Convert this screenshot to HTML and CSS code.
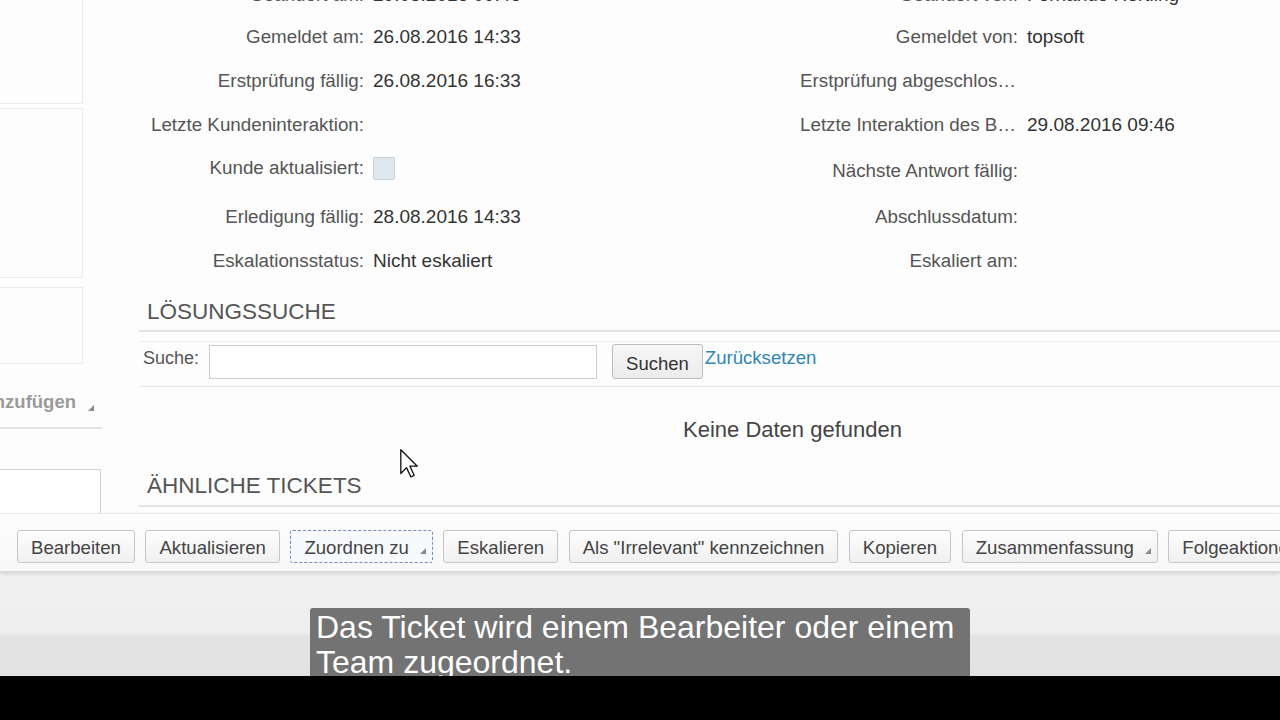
FILE: index.html
```html
<!DOCTYPE html>
<html lang="de">
<head>
    <meta charset="UTF-8">
    <meta name="viewport" content="width=device-width, initial-scale=1.0">
    <title>Ticket</title>
    <link rel="stylesheet" href="styles.css">
</head>
<body>
    <div class="screen">
        <div class="workspace">
            <aside class="sidebar">
                <div class="side-box side-box-top"></div>
                <div class="side-box side-box-mid"></div>
                <div class="side-box side-box-low"></div>
                <div class="side-action">
                    <span class="side-action-text">Anhang hinzufügen</span>
                    <i class="corner"></i>
                </div>
                <div class="side-input"></div>
            </aside>

            <main class="main">
                <div class="details">
                    <div class="label">Geändert am:</div>
                    <div class="value">29.08.2016 09:46</div>
                    <div class="label">Geändert von:</div>
                    <div class="value">Fernando Hertling</div>

                    <div class="label">Gemeldet am:</div>
                    <div class="value">26.08.2016 14:33</div>
                    <div class="label">Gemeldet von:</div>
                    <div class="value">topsoft</div>

                    <div class="label">Erstprüfung fällig:</div>
                    <div class="value">26.08.2016 16:33</div>
                    <div class="label">Erstprüfung abgeschlossen:</div>
                    <div class="value"></div>

                    <div class="label">Letzte Kundeninteraktion:</div>
                    <div class="value"></div>
                    <div class="label">Letzte Interaktion des Bearbeiters:</div>
                    <div class="value">29.08.2016 09:46</div>

                    <div class="label label-raised">Kunde aktualisiert:</div>
                    <div class="value label-raised"><span class="checkbox"></span></div>
                    <div class="label">Nächste Antwort fällig:</div>
                    <div class="value"></div>

                    <div class="label">Erledigung fällig:</div>
                    <div class="value">28.08.2016 14:33</div>
                    <div class="label">Abschlussdatum:</div>
                    <div class="value"></div>

                    <div class="label">Eskalationsstatus:</div>
                    <div class="value">Nicht eskaliert</div>
                    <div class="label">Eskaliert am:</div>
                    <div class="value"></div>
                </div>

                <h2 class="section-title">LÖSUNGSSUCHE</h2>
                <div class="search-row">
                    <span class="search-label">Suche:</span>
                    <input class="search-input" type="text">
                    <button class="search-button">Suchen</button>
                    <a class="reset-link" href="#">Zurücksetzen</a>
                </div>
                <div class="no-data">Keine Daten gefunden</div>

                <h2 class="section-title section-title-second">ÄHNLICHE TICKETS</h2>
            </main>
        </div>

        <div class="toolbar">
            <button class="tool-btn">Bearbeiten</button>
            <button class="tool-btn">Aktualisieren</button>
            <button class="tool-btn tool-btn-menu tool-btn-focus">Zuordnen zu<i class="corner"></i></button>
            <button class="tool-btn">Eskalieren</button>
            <button class="tool-btn">Als "Irrelevant" kennzeichnen</button>
            <button class="tool-btn">Kopieren</button>
            <button class="tool-btn tool-btn-menu">Zusammenfassung<i class="corner"></i></button>
            <button class="tool-btn tool-btn-menu">Folgeaktionen<i class="corner"></i></button>
        </div>

        <div class="footer">
            <div class="subtitle">Das Ticket wird einem Bearbeiter oder einem Team zugeordnet.</div>
        </div>
        <div class="letterbox"></div>

        <svg class="cursor" width="20" height="30" viewBox="0 0 20 30">
            <path d="M0.8 0.8 L0.8 24.5 L6.5 18.6 L10.8 27.8 L14.2 26.3 L9.9 17.2 L17.3 17.2 Z" fill="#fff" stroke="#111" stroke-width="1.3" stroke-linejoin="round"/>
        </svg>
    </div>
</body>
</html>
```

FILE: styles.css
```css
body {
    margin: 0;
    padding: 0;
    font-family: 'Liberation Sans', Arial, sans-serif;
    background: #fff;
    overflow: hidden;
}

.screen {
    position: relative;
    width: 1280px;
    height: 720px;
    display: flex;
    flex-direction: column;
    overflow: hidden;
}

.workspace {
    height: 513px;
    flex-shrink: 0;
    display: flex;
    overflow: hidden;
    background: #fdfdfd;
}

.sidebar {
    width: 102px;
    flex-shrink: 0;
    display: flex;
    flex-direction: column;
    overflow: hidden;
}

.sidebar > * {
    flex-shrink: 0;
}

.side-box {
    width: 83px;
    box-sizing: border-box;
    border: 1px solid #ebebeb;
    border-left: none;
}

.side-box-top {
    height: 104px;
    border-top: none;
}

.side-box-mid {
    height: 170px;
    margin-top: 4px;
}

.side-box-low {
    height: 77px;
    margin-top: 9px;
}

.side-action {
    margin-top: 24px;
    height: 41px;
    box-sizing: border-box;
    border-bottom: 2px solid #e2e2e2;
    display: flex;
    justify-content: flex-end;
    align-items: flex-start;
    padding-top: 3px;
    padding-right: 8px;
    overflow: hidden;
    white-space: nowrap;
}

.side-action-text {
    font-size: 18.5px;
    line-height: 22px;
    font-weight: bold;
    color: #9a9a9a;
    flex-shrink: 0;
    margin-right: 12px;
}

.side-action .corner {
    margin-top: 14px;
    margin-right: 0;
}

.side-input {
    margin-top: 40px;
    width: 101px;
    height: 60px;
    box-sizing: border-box;
    border: 1px solid #d2d2d2;
    border-left: none;
    background: #fff;
}

.main {
    flex: 1;
    padding-left: 37px;
}

.details {
    margin-top: -26px;
    display: grid;
    grid-template-columns: 225px 418px 218px 1fr;
    grid-template-rows: 41px 44px 44px 44px 48px 44px 44px;
    column-gap: 9px;
    font-size: 18.8px;
    line-height: 22px;
}

.label {
    align-self: center;
    text-align: right;
    color: #555;
    white-space: nowrap;
    overflow: hidden;
    text-overflow: ellipsis;
}

.value {
    align-self: center;
    color: #333;
    font-size: 19px;
    white-space: nowrap;
}

.label-raised {
    margin-top: -6px;
}

.checkbox {
    display: block;
    width: 22px;
    height: 23px;
    box-sizing: border-box;
    background: #dfe7f1;
    border: 1px solid #c8d0da;
    border-radius: 2px;
}

.section-title {
    margin: 16px 0 0;
    padding: 0 0 5px 8px;
    font-size: 22.5px;
    line-height: 26px;
    font-weight: normal;
    color: #555;
    border-bottom: 2px solid #e3e3e3;
}

.section-title-second {
    margin-top: 30px;
    padding-bottom: 6px;
}

.search-row {
    margin-top: 9px;
    height: 46px;
    box-sizing: border-box;
    border-top: 1px solid #eeeeee;
    border-bottom: 1px solid #e6e6e6;
    display: flex;
    align-items: flex-start;
    padding-left: 4px;
}

.search-label {
    margin-top: 5px;
    font-size: 18px;
    line-height: 22px;
    color: #555;
    margin-right: 10px;
}

.search-input {
    margin: 3px 15px 0 0;
    width: 388px;
    height: 34px;
    box-sizing: border-box;
    border: 1px solid #cdcdcd;
    background: #fff;
    padding: 0;
}

.search-button {
    margin-top: 2px;
    height: 35px;
    padding: 5px 13px 0;
    font-family: inherit;
    font-size: 18.5px;
    color: #333;
    background: linear-gradient(#f6f6f6, #ececec);
    border: 1px solid #bdbdbd;
    border-radius: 3px;
}

.reset-link {
    margin: 5px 0 0 2px;
    font-size: 18.6px;
    line-height: 22px;
    color: #2f86b2;
    text-decoration: none;
}

.no-data {
    margin-top: 30px;
    padding-left: 544px;
    font-size: 22px;
    line-height: 26px;
    color: #444;
}

.toolbar {
    height: 59px;
    flex-shrink: 0;
    box-sizing: border-box;
    border-top: 1px solid #e8e8e8;
    border-bottom: 1px solid #d8d8d8;
    background: linear-gradient(#fcfcfc, #f8f8f8);
    box-shadow: 0 2px 4px rgba(0, 0, 0, 0.12);
    padding: 16px 0 0 17px;
    display: flex;
    align-items: flex-start;
    white-space: nowrap;
    overflow: hidden;
    position: relative;
    z-index: 1;
}

.tool-btn {
    position: relative;
    flex-shrink: 0;
    height: 33px;
    margin-right: 10.5px;
    padding: 2px 13px 0;
    font-family: inherit;
    font-size: 18.6px;
    color: #444;
    background: linear-gradient(#fdfdfd, #f0f0f0);
    border: 1px solid #c6c6c6;
    border-radius: 3px;
}

.tool-btn-menu {
    padding-right: 23px;
}

.tool-btn-focus {
    border: 1px dashed #6b8ec4;
    background: #f7f9fc;
}

.corner {
    display: block;
    width: 0;
    height: 0;
    border-left: 6px solid transparent;
    border-bottom: 6px solid #8a8a8a;
}

.tool-btn .corner {
    position: absolute;
    right: 6px;
    bottom: 8px;
}

.footer {
    position: relative;
    height: 104px;
    flex-shrink: 0;
    overflow: hidden;
    background: linear-gradient(#f1f1f1 0%, #eeeeee 58%, #e4e4e4 62%, #e2e2e2 100%);
}

.subtitle {
    position: absolute;
    left: 310px;
    top: 36px;
    width: 660px;
    height: 90px;
    box-sizing: border-box;
    padding: 2px 6px 0;
    background: #737373;
    border-radius: 3px 3px 0 0;
    color: #fff;
    font-size: 32px;
    line-height: 35px;
}

.letterbox {
    height: 44px;
    flex-shrink: 0;
    background: #000;
}

.cursor {
    position: absolute;
    left: 400px;
    top: 449px;
}
```
